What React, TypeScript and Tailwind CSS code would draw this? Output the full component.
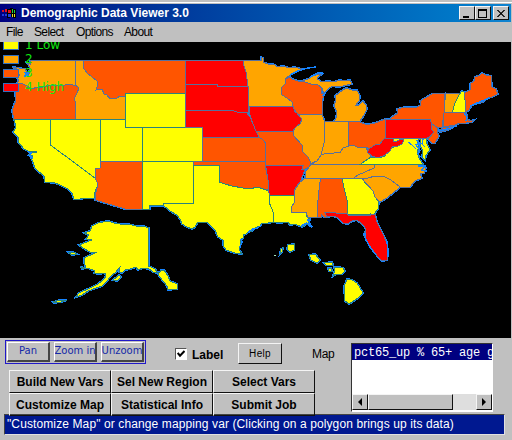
import React from "react";

const Y = "#ffff00";
const O = "#ffa500";
const D = "#ff5500";
const R = "#ff0000";

type Region = [string, string];

const regions: Region[] = [
  // West
  [O, "30,60.5 75.5,60.5 75.5,85 73,85 68,84 62,86 50,85 43,87 38,87 31,89 27,86 23,84 17,83 19,80 17,78 20,75 16,73 17,69 12,67 19,68 25,69 27,73 25,75 29,74 30,67 27,63 30,64"],
  [D, "17,83 23,84 27,86 31,89 38,87 43,87 50,85 62,86 68,84 73,85 76,85 79,88 77,93 74,99 76,103 75.5,119.5 14,119.5 12,111 14,105 16,100 15,93 17,88"],
  [O, "75.5,60.5 83.5,60.5 83.5,68 87,73 92,77 97,81 98,84 96,90 102,89 104,94 107,95 110,99 117,98 120,96 125.5,97 125.5,119.5 75.5,119.5 76,103 74,99 77,93 79,88 75.5,85"],
  [D, "83.5,60.5 185.5,60.5 185.5,93.5 125.5,93.5 125.5,97 120,96 117,98 110,99 107,95 104,94 102,89 96,90 98,84 97,81 92,77 87,73 83.5,68"],
  [Y, "125.5,93.5 185.5,93.5 185.5,127.5 125.5,127.5"],
  [Y, "14,119.5 50.5,119.5 50.5,145 95,178 98,184 95,192 94,198 86,198 80,199 74,199 72,193 68,189 60,185 55,183 45,182 44,176 38,171 35,168 33,162 31,158 33,156 29,155 32,153 37,152 28,151 24,149 18,142 18,137 13,132 16,128 15,123"],
  [Y, "50.5,119.5 100.5,119.5 100.5,168 95,169 95,178 50.5,145"],
  [Y, "100.5,119.5 125.5,119.5 125.5,127.5 142.5,127.5 142.5,161.5 100.5,161.5"],
  [D, "100.5,161.5 142.5,161.5 142.5,209 125,209 95,200 96,192 98,184 95,178 95,169 100.5,168"],
  [Y, "142.5,127.5 202.5,127.5 202.5,161.5 142.5,161.5"],
  [Y, "142.5,161.5 193.5,161.5 193.5,203.5 163.5,203.5 163.5,205.5 149.5,205.5 149.5,209 142.5,209"],
  // Plains
  [R, "185.5,60.5 243,60.5 244,66 246,72 247,79 248,86.5 218,86.5 217,84.5 185.5,84.5"],
  [R, "185.5,84.5 217,84.5 218,86.5 248,86.5 249,92 249,106 248,113 237,112 233,110.5 185.5,110.5"],
  [R, "185.5,110.5 233,110.5 237,112 247,113 250,117 253,124 256,131 259,137.5 202.5,137.5 202.5,127.5 185.5,127.5"],
  [D, "202.5,137.5 259,137.5 262,139 265.5,143 265.5,161.5 202.5,161.5"],
  [D, "193.5,161.5 265.5,161.5 266,170 268,180 268,190 257,187 250,189 243,188 238,187 232,186 225,184 219.5,182 219.5,165.5 193.5,165.5"],
  [Y, "193.5,165.5 219.5,165.5 219.5,182 225,184 232,186 243,188 250,189 257,187 269,191 269,202 273,208 274,214 273,222 268,223 262,223 260,226 255,228 252,231 248,232 246,234 243,235 243,238 240,240 241,244 239,249 242,254 235,253 226,250 223,245 223,240 218,237 215,230 211,226 207,222 198,222 195,227 192,229 187,227 182,224 180,219 177,215 170,211 163.5,205.5 163.5,203.5 193.5,203.5"],
  // Midwest
  [O, "243,60.5 261,60.5 261,57 263,58 263,62 268,64 273,64 278,67 283,66 290,68 294,67 302,69 296,72 290,75 285,79 285,84 281,88 282,95 287,98 292,102 293,106.5 249,106.5 248,86 247,79 246,72 244,66"],
  [R, "249,106.5 293,106.5 295,112 300,115 302,119 300,124 296,127 293,131.5 256,131 253,124 250,115"],
  [D, "285,79 290,77 292,79 298,81 305,82 311,84 318,85 322,88 321,93 324,94 323,98 322,105 322,115 298,114.5 294,109 292,102 287,98 282,95 281,88 285,84"],
  [O, "302,81 308,79 313,76 318,74 322,74 318,77 317,79 322,82 328,81 334,82 339,80 345,81 350,80 352,84 343,86 338,87 332,86 327,90 324,94 322,88 318,85 311,84"],
  [O, "340,92 343,90 346,88 352,90 357,90 360,96 359,101 356,105 359,105 363,101 366,105 367,109 364,115 360,121 334,121.5 336,118 337,113 334,105 336,100 335,96"],
  [O, "298,114.5 322,115 325,122 324,143 322,153 320,158 317,161 311,163.5 308,157 303,152 302,146 295,138 292,132 296,127 300,124 302,119"],
  [O, "325,121.5 348.5,121.5 348.5,146 343,148 340,153 336,152 332,154 327,153 321,155 324,143"],
  [D, "348.5,121.5 360,122 365,124 370,124 375,123 385,119 385,138 383,140 380,144 375,145 371,150 366,147 357,147 353,145 348.5,146"],
  [D, "256,131 293,131.5 293,135 302,145 303,152 308,157 311,163.5 309,167 305,169 302,169 303,165.5 265.5,165.5 265.5,143 262,139 259,137.5"],
  // South
  [R, "265.5,165.5 303,165.5 302,169 305,169 303,175 300,182 296,187 294,191 294,195.5 270,195.5 268,190 268,180"],
  [Y, "270,195.5 294,195.5 295,201 291,208 291,212.5 306,212.5 307,217 310,219 308,222 312,227 307,224 302,227 295,224 290,225 288,222 279,223 273,222 274,214 269,202"],
  [O, "305,178.5 320.5,178.5 319,190 317,210 318,217 308,217.5 306,212.5 291,212.5 291,208 295,201 294,191 300,182"],
  [D, "320.5,178.5 342,178.5 344,188 347,200 347,213.5 325,212.5 327,217 324,217 321,214 321,217 318,217 317,210 319,190"],
  [Y, "342,178.5 362,178.5 367,185 373,191 375,197 379,202 378,209 375,213 373,216 370,213 370,215 347,214.5 347,200 344,188"],
  [R, "325,212.5 347,213.5 348,215 370,216 371,214 375,214 377,222 383,234 387,243 388,252 387,260 382,261 378,257 375,253 370,247 367,241 364,235 366,230 364,226 357,220 352,221 348,224 343,223 338,218 333,216 327,217"],
  [O, "311,164.5 375,165 374,168 365,172 358,175 353,178.5 305,178.5 306,171"],
  [O, "321,155 327,153 332,154 336,152 340,153 343,148 348.5,146 353,145 357,147 366,147 368,152 371,156 366,161 360,164.5 311,164.5 317,161"],
  [O, "375,165 423,164.5 426,168 424,173 420,174 422,178 415,181 410,187 400,187 391,180 385,177 375,176 368,178 353,178.5 358,175 365,172 374,168"],
  [O, "362,178.5 368,178 375,176 385,177 391,180 400,187 397,190 393,193 387,198 380,202 375,197 373,191"],
  [Y, "360,164.5 371,157 378,158 385,156 390,148 398,146 402,141 393,141 393,138.5 419,138.5 417,143 419,147 417,152 419,158 423,164.5"],
  [Y, "421,138.5 426,138.5 427,144 430,150 426,155 425,160 422,157 423,151 420,145"],
  [R, "385,119 385,138.5 393,138.5 393,142 397,141 401,139 404,140 402,144 398,146 392,147 390,151 385,155 378,158 372,156 367,152 370,148 375,145 380,144 383,140 385,138"],
  // Northeast
  [R, "385,119 390,119 430,119.5 432,124 431,129 434,132 430,136 427,138.5 385,138.5"],
  [D, "390,119 392,117 398,113 397,109 405,107 417,107 421,105 420,101 425,98 432,94 445,93.5 444,113 443,120 442,127 437,127 432,124 430,119.5"],
  [D, "432,124 438,128 437,132 439,136 435,143 432,143 428,139 434,132 431,129"],
  [D, "439,131 443,128 455,126 448,130 440,132"],
  [O, "445.5,93.5 460,93.5 455,103 452,113 444,113"],
  [Y, "460,93.5 462,91 464,92 466,107 465,112.5 452,113 455,103"],
  [D, "444,113 465,112.5 467,115 467,119 470,121 474,120 472,122 466,123 460,123 455,125 443,127 443,119"],
  [D, "464.5,93 470,90 470,84 474,81 475,77 480,75 482,73 486,75 491,76 492,87 496,89 498,94 492,97 488,98 483,102 478,103 472,105 469,110 466,112"],
  // Alaska
  [Y, "84,233 90,231 92,226 98,223 103,222 108,221 114,223 120,224 128,224 136,226 143,226 148.5,228 148.5,266 155,269 157,272 160,272 161,270 164,270 168,276 170,281 177,284 177,289 168,290 167,286 163,281 159,276 158,273 153,272 149,269 143,268 138,270 136,267 130,269 125,270 122,273 119,272 120,267 118,269 116,272 111,276 107,281 102,286 96,288 88,291 82,295 76,297 79,293 90,288 98,284 104,279 106,276 105,273 98,274 94,273 95,271 88,268 86,268 84,262 84,258 97,252 90,252 83,248 79,245 92,240 86,239 89,235"],
  [Y, "68,252 73,252 77,254 72,255"],
  [Y, "53,302 60,300 67,300 61,302 54,303"],
  [Y, "113,280 119,275 121,277 117,281"],
  [Y, "81,267 85,268 82,269"],
  // Hawaii
  [Y, "288,245 294,244 294,250 290,252 287,249"],
  [Y, "281,249 283,248 282,252 280,254"],
  [Y, "309,255 315,254 320,260 317,263 311,260"],
  [Y, "324,263 332,262 333,265 326,265"],
  [Y, "328,268 331,268 332,271 329,271"],
  [Y, "334,267 338,267 343,268 345,271 342,274 336,274 333,276 335,270"],
  [Y, "347,279 352,280 357,283 363,293 358,298 349,304 345,301 344,287"],
];

// Ragged shore detail: sounds, bays, keys and barrier islands
const shores = [
  "24,72 28,75 25,76 29,71",
  "28,152 31,153 30,156 33,158",
  "241,239 242,242 240,247",
  "248,232 253,229 258,228 262,224",
  "301,226 307,223 312,227 308,220 311,220",
  "365,233 366,240 370,247 376,255",
  "387,241 388,257",
  "416,140 420,143 416,145 420,150 418,154 421,157",
  "408,142 412,145 416,149",
  "423,139 422,144 425,147",
  "418,166 425,166 422,170 427,171",
  "470,106 477,103 482,101 489,98",
  "464,113 467,117 466,121",
  "439,131 447,129 457,126",
  "290,75 298,71 308,68 316,67",
  "310,77 318,73 323,73",
  "323,96 326,92 330,88",
];

const legend: [string, string][] = [
  [Y, "1 Low"],
  [O, "2"],
  [D, "3"],
  [R, "4 High"],
];

const raised =
  "border border-t-[#f4f4f4] border-l-[#f4f4f4] border-r-[#111] border-b-[#111]";

function ElectionMap() {
  return (
    <div className="relative h-[296px] w-[511px] overflow-hidden bg-black">
      <svg
        width="511"
        height="296"
        viewBox="0 42 511 296"
        shapeRendering="crispEdges"
        className="block"
      >
        {regions.map(([, pts], i) => (
          <polygon key={i} points={pts} fill="none" stroke="#1684ff" strokeWidth="2" />
        ))}
        {regions.map(([fill, pts], i) => (
          <polygon
            key={i}
            points={pts}
            fill={fill}
            stroke={fill === Y ? "#2b847c" : "#58709c"}
            strokeWidth="1"
          />
        ))}
        {shores.map((pts, i) => (
          <polyline key={i} points={pts} fill="none" stroke="#1684ff" strokeWidth="1.4" />
        ))}
        <rect x="274" y="255" width="2" height="1" fill="#a8e8c0" />
      </svg>
      <div className="absolute -top-[4px] left-[3px] flex flex-col">
        {legend.map(([color, label]) => (
          <div key={label} className="flex h-[14px] items-center">
            <span
              className="h-[9px] w-[16px] border border-[#3070c0]"
              style={{ backgroundColor: color }}
            />
            <span className="ml-[6px] font-['DejaVu_Sans',sans-serif] text-[12px] leading-[12px] whitespace-pre text-[#10e810]">
              {label}
            </span>
          </div>
        ))}
      </div>
    </div>
  );
}

function WindowButton({ children }: { children: React.ReactNode }) {
  return (
    <span className={`flex h-[14px] w-[16px] items-center justify-center bg-[#c0c0c0] ${raised}`}>
      <svg width="12" height="11" viewBox="0 0 12 11" shapeRendering="crispEdges" fill="none" stroke="#000">
        {children}
      </svg>
    </span>
  );
}

function ToolButton({ children }: { children: React.ReactNode }) {
  return (
    <span className="flex h-[20px] w-[43px] justify-center overflow-hidden border-t border-r-2 border-b-2 border-l border-t-white border-r-[#444] border-b-[#444] border-l-white font-['DejaVu_Sans',sans-serif] text-[10px] leading-[16px] whitespace-nowrap text-[#1428a8]">
      {children}
    </span>
  );
}

export default function App() {
  return (
    <div className="h-[440px] w-[512px] overflow-hidden bg-[#c0c0c0] pt-[2px] font-['Liberation_Sans',Arial,sans-serif] text-black">
      <div className="h-[2px] border-t border-white" />
      <div className="flex h-[18px] w-[511px] items-center bg-gradient-to-r from-[#000080] to-[#1084d0] pr-[2px]">
        <svg width="16" height="14" viewBox="0 0 16 14" shapeRendering="crispEdges" className="ml-[2px]">
          <path d="M5 3h3V2h3v1h3v9h-3v-1H8v1H5z" fill="#000" />
          <path d="M0 4h2v2H0zM3 3h2v3H3zM6 4h3v3H6z" fill="#e01020" />
          <path d="M0 8h2v2H0zM3 8h2v2H3zM6 8h3v3H6z" fill="#2040e0" />
          <path d="M10 3h1v4h-1zM12 4h1v3h-1z" fill="#20d040" />
          <path d="M10 8h1v3h-1zM12 8h1v3h-1z" fill="#f0e020" />
        </svg>
        <span className="ml-[3px] text-[12px] leading-[18px] font-bold whitespace-nowrap text-white">
          Demographic Data Viewer 3.0
        </span>
        <div className="ml-auto flex">
          <WindowButton>
            <path d="M2 9h6" strokeWidth="2" />
          </WindowButton>
          <WindowButton>
            <path d="M1.5 1.5h8v8h-8zM1 2h9" />
          </WindowButton>
          <span className="w-[2px]" />
          <WindowButton>
            <path d="M2 2l7 7M3 2l7 7M9 2l-7 7M10 2l-7 7" strokeWidth="0.8" />
          </WindowButton>
        </div>
      </div>
      <div className="flex h-[20px] pl-[6px] text-[12px] leading-[20px] tracking-[-0.65px]">
        <span className="w-[28px]">File</span>
        <span className="w-[42px]">Select</span>
        <span className="w-[48px]">Options</span>
        <span>About</span>
      </div>
      <ElectionMap />
      <div className="flex h-[77px] pt-[2px]">
        <div className="w-[351px]">
          <div className="flex h-[30px]">
            <div className="ml-[5px] flex h-[24px] w-[141px] justify-between border border-[#2018c8] px-px pt-px">
              <ToolButton>Pan</ToolButton>
              <ToolButton>Zoom in</ToolButton>
              <ToolButton>Unzoom</ToolButton>
            </div>
            <span className="mt-[8px] ml-[29px] flex h-[12px] w-[12px] items-center justify-center border border-t-[#555] border-r-white border-b-white border-l-[#555] bg-white">
              <svg width="8" height="8" viewBox="0 0 8 8" fill="none" stroke="#000" strokeWidth="2">
                <path d="M.7 3l2.3 2.7L7.5 1" />
              </svg>
            </span>
            <span className="mt-[7px] ml-[5px] w-[46px] text-[12px] leading-[16px] font-bold">Label</span>
            <span className={`mt-[3px] flex h-[21px] w-[44px] items-center justify-center text-[10px] tracking-[0.3px] ${raised}`}>
              Help
            </span>
            <span className="mt-[6px] ml-[30px] text-[12px] leading-[16px] tracking-[-0.3px]">Map</span>
          </div>
          <div className="ml-[9px] grid w-[306px] grid-cols-3">
            {["Build New Vars", "Sel New Region", "Select Vars", "Customize Map", "Statistical Info", "Submit Job"].map((t) => (
              <span
                key={t}
                className={`flex h-[23px] items-center justify-center text-[12px] font-bold whitespace-nowrap ${raised}`}
              >
                {t}
              </span>
            ))}
          </div>
        </div>
        <div className="mt-[3px] flex h-[69px] w-[142px] flex-col overflow-hidden border border-t-[#333] border-r-white border-b-white border-l-[#333] bg-white">
          <div className="h-[16px] shrink-0 overflow-hidden bg-[#000080] pl-[2px] font-['Liberation_Mono',monospace] text-[12px] leading-[18px] tracking-[-0.2px] whitespace-nowrap text-white">
            pct65_up % 65+ age g
          </div>
          <div className="mt-auto mb-px flex h-[16px] bg-[#dedede]">
            <span className={`flex w-[16px] items-center justify-center bg-[#c0c0c0] ${raised}`}>
              <svg width="4" height="8" viewBox="0 0 4 8"><path d="M4 0v8L0 4z" /></svg>
            </span>
            <span className={`w-[85px] bg-[#c0c0c0] ${raised}`} />
            <span className={`ml-auto flex w-[16px] items-center justify-center bg-[#c0c0c0] ${raised}`}>
              <svg width="4" height="8" viewBox="0 0 4 8"><path d="M0 0v8l4-4z" /></svg>
            </span>
          </div>
        </div>
      </div>
      <div className="-mt-px ml-[4px] h-[21px] w-[501px] border border-t-[#444] border-r-[#e0e0e0] border-b-[#e0e0e0] border-l-[#444] bg-[#001890] pl-[2px] text-[12px] leading-[18px] tracking-[0.11px] whitespace-nowrap text-white">
        "Customize Map" or change mapping var (Clicking on a polygon brings up its data)
      </div>
    </div>
  );
}
